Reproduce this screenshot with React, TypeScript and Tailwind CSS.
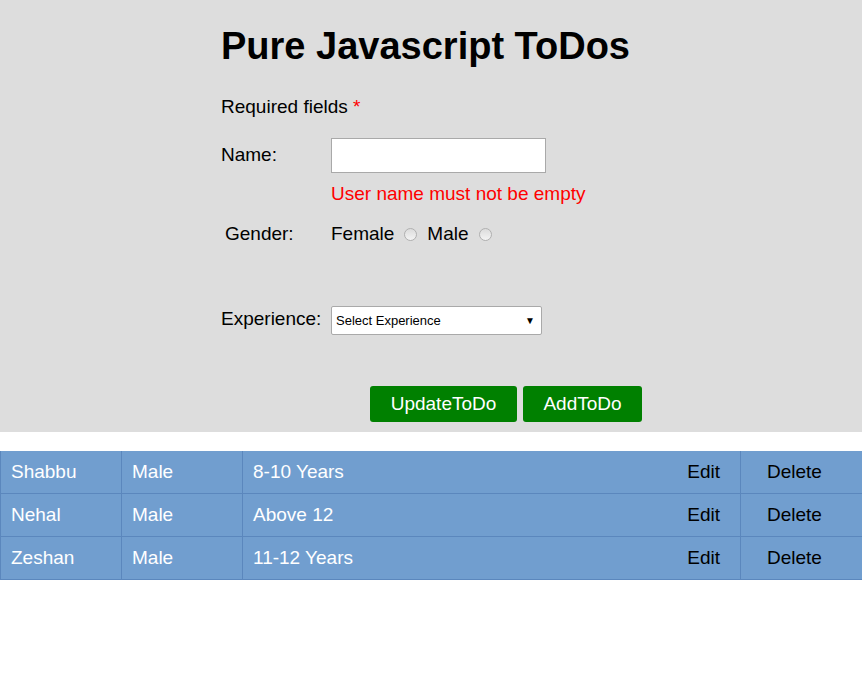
import React from "react";

const rows = [
  { name: "Shabbu", gender: "Male", exp: "8-10 Years" },
  { name: "Nehal", gender: "Male", exp: "Above 12" },
  { name: "Zeshan", gender: "Male", exp: "11-12 Years" },
];

function Radio() {
  return (
    <span className="inline-block w-[13px] h-[13px] rounded-full border border-[#b0b0b0] bg-gradient-to-b from-[#dcdcdc] to-[#f4f4f4] ml-[10px] mr-[10px]" />
  );
}

export default function App() {
  return (
    <div className="w-[862px] min-h-[694px] bg-white text-black font-['Liberation_Sans',Arial,sans-serif]">
      {/* Form */}
      <div className="bg-[#dddddd] h-[432px] pl-[221px] pt-[25px]">
        <h1 className="text-[38px] leading-[42px] font-bold">Pure Javascript ToDos</h1>

        <p className="text-[19px] leading-[22px] mt-[29px]">
          Required fields <span className="text-[#ff0000]">*</span>
        </p>

        <div className="flex items-center mt-[20px]">
          <label className="w-[110px] text-[19px]">Name:</label>
          <input className="w-[215px] h-[35px] bg-white border border-[#a9a9a9] outline-none" />
        </div>
        <p className="ml-[110px] mt-[10px] text-[19px] leading-[22px] text-[#ff0000]">
          User name must not be empty
        </p>

        <div className="flex items-center mt-[18px] text-[19px] leading-[22px]">
          <label className="w-[110px] pl-[4px]">Gender:</label>
          <span>Female</span>
          <Radio />
          <span>Male</span>
          <Radio />
        </div>

        <div className="flex items-center mt-[61px]">
          <label className="w-[110px] text-[19px] -mt-[2px]">Experience:</label>
          <div className="w-[211px] h-[29px] bg-white border border-[#a9a9a9] rounded-[2px] flex items-center justify-between pl-[4px] pr-[6px] text-[13px]">
            <span>Select Experience</span>
            <span className="text-[10px]">▼</span>
          </div>
        </div>

        <div className="flex gap-[6px] ml-[149px] mt-[51px]">
          <button className="w-[147px] h-[36px] bg-[#008000] text-white text-[19px] rounded-[3px]">UpdateToDo</button>
          <button className="w-[119px] h-[36px] bg-[#008000] text-white text-[19px] rounded-[3px]">AddToDo</button>
        </div>
      </div>

      {/* Table */}
      <div className="mt-[19px] border-l border-b border-[#5b87bd] bg-[#719ecf] text-[19px]">
        {rows.map((r, i) => (
          <div key={r.name} className={`flex ${i > 0 ? "h-[43px] border-t border-[#5b87bd]" : "h-[42px]"}`}>
            <div className="w-[121px] pl-[10px] flex items-center text-white border-r border-[#5b87bd]">{r.name}</div>
            <div className="w-[121px] pl-[10px] flex items-center text-white border-r border-[#5b87bd]">{r.gender}</div>
            <div className="w-[498px] pl-[10px] pr-[20px] flex items-center justify-between border-r border-[#5b87bd]">
              <span className="text-white">{r.exp}</span>
              <span>Edit</span>
            </div>
            <div className="flex-1 pl-[26px] flex items-center">Delete</div>
          </div>
        ))}
      </div>
    </div>
  );
}
